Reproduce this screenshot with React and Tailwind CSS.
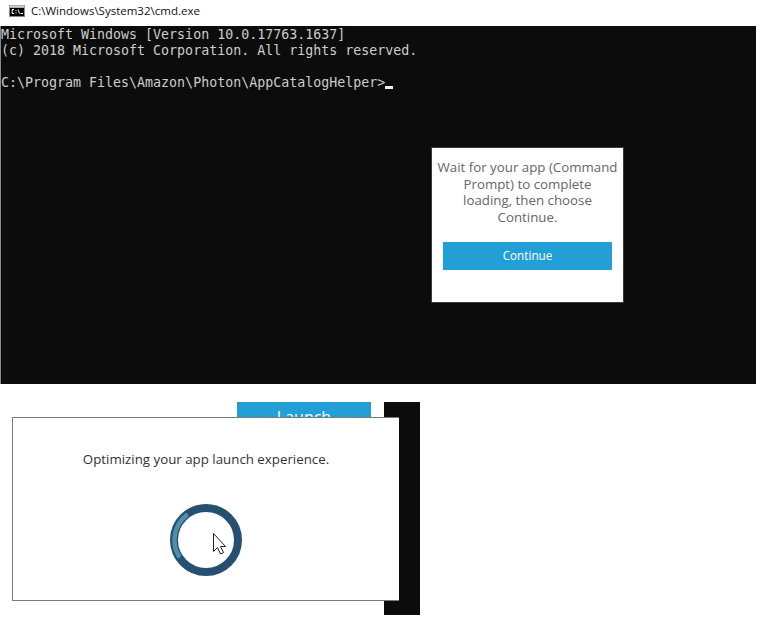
import React from 'react';

const uiFont = "font-['Open_Sans','Noto_Sans',sans-serif]";

function CmdIcon() {
  return (
    <svg width="16" height="12" viewBox="0 0 16 12" className="shrink-0">
      <rect x="0" y="0" width="16" height="12" fill="#8a8a8a" />
      <rect x="0.5" y="0.5" width="15" height="2" fill="#d0d0d0" />
      <rect x="1" y="3" width="14" height="8" fill="#000" />
      <path d="M5 4.5H3.2V8.5H5M6.5 5.5h1M6.5 8h1M9 4.5l1.5 4M11.5 8.5h2.5" stroke="#fff" strokeWidth="1" fill="none" />
    </svg>
  );
}

function Spinner() {
  return (
    <svg width="72" height="72" viewBox="0 0 72 72">
      <circle cx="36" cy="36" r="32" fill="none" stroke="#26506f" strokeWidth="8" />
      <path d="M8.7 51.8 A31.5 31.5 0 0 1 16.2 11.5" fill="none" stroke="#4f8fae" strokeWidth="4.5" strokeLinecap="round" />
      <path d="M43.5 29.5V47.5L47.5 43.5L50.5 50L53.5 48.5L50.5 42.5H55.5Z" fill="#fff" stroke="#222" strokeWidth="1" strokeLinejoin="round" />
    </svg>
  );
}

export default function App() {
  return (
    <div className="h-[621px] w-[765px] bg-white overflow-hidden">
      <div className="w-[756px]">
        <div className={`flex h-[26px] items-center gap-[6px] pl-[9px] pb-[5px] text-[11.5px] text-[#111111] ${uiFont}`}>
          <CmdIcon />
          <span>C:\Windows\System32\cmd.exe</span>
        </div>
        <div className="relative h-[358px] border-l border-[#8a8a8a] bg-[#0c0c0c]">
          <pre className="pt-[1px] font-['DejaVu_Sans_Mono',monospace] text-[13.3px] leading-[16px] text-[#cccccc]">
            {'Microsoft Windows [Version 10.0.17763.1637]\n(c) 2018 Microsoft Corporation. All rights reserved.\n\nC:\\Program Files\\Amazon\\Photon\\AppCatalogHelper>'}
            <span className="mb-[-2px] inline-block h-[3px] w-[8px] bg-[#eeeeee]"></span>
          </pre>
          <div className={`absolute left-[430px] top-[121px] h-[156px] w-[193px] border border-[#3a3a3a] bg-white px-[2px] pt-[11px] text-center ${uiFont}`}>
            <p className="text-[13.3px] leading-[16.7px] text-[#666666]">
              Wait for your app (Command<br />Prompt) to complete<br />loading, then choose<br />Continue.
            </p>
            <button className="mx-auto mt-[16px] block h-[28px] w-[169px] bg-[#239fd8] text-[11.7px] text-white">
              Continue
            </button>
          </div>
        </div>
      </div>

      <div className="relative mt-[18px] h-[213px] w-[420px]">
        <div className="ml-[384px] h-[213px] w-[36px] bg-[#0c0c0c]"></div>
        <button className={`absolute left-[237px] top-0 h-[30px] w-[134px] bg-[#239fd8] text-[16px] text-white ${uiFont}`}>
          Launch
        </button>
        <div className={`absolute left-[12px] top-[15px] flex h-[184px] w-[387px] flex-col items-center border border-r-0 border-[#7a7a7a] bg-white ${uiFont}`}>
          <p className="mt-[32px] text-[13.3px] leading-[18px] text-[#333333]">
            Optimizing your app launch experience.
          </p>
          <div className="mt-[36px]">
            <Spinner />
          </div>
        </div>
      </div>
    </div>
  );
}
